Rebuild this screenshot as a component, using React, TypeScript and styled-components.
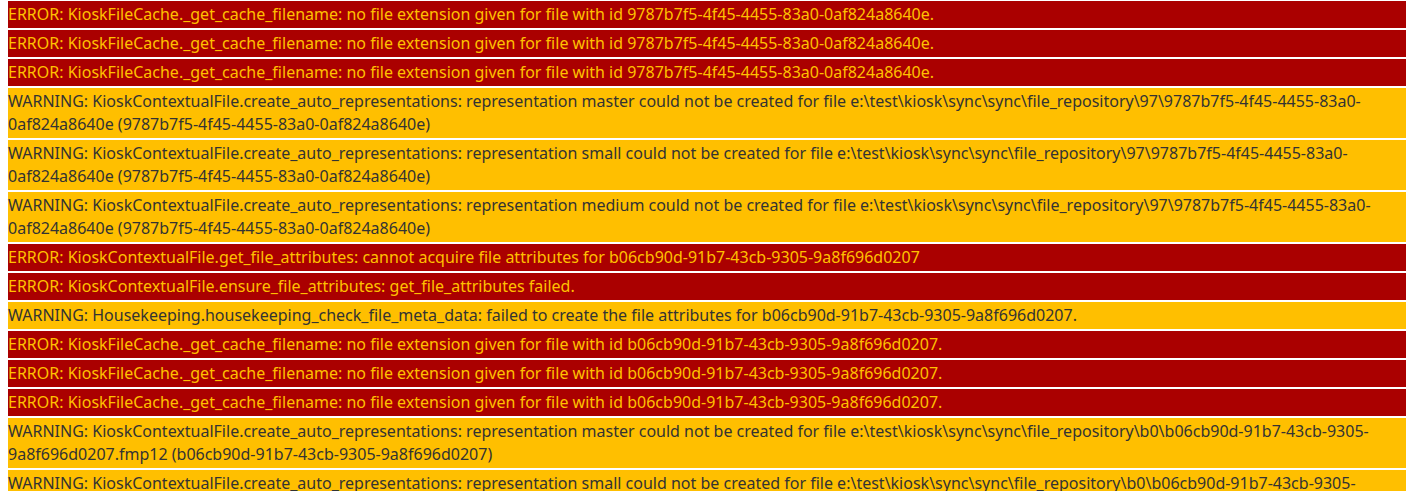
import styled, { createGlobalStyle } from 'styled-components';

const GlobalStyle = createGlobalStyle`
  body {
    margin: 0;
    padding: 1px 8px 0 8px;
    background: #fff;
    font-family: "Noto Sans", "Open Sans", sans-serif;
    overflow: hidden;
  }
`;

const LogList = styled.div`
  display: flex;
  flex-direction: column;
  gap: 2px;
`;

type Level = 'error' | 'warning';

const LogLine = styled.div<{ $level: Level }>`
  padding: 2px 0;
  font-size: 16px;
  line-height: 23px;
  background: ${(p) => (p.$level === 'error' ? '#aa0000' : '#ffbf00')};
  color: ${(p) => (p.$level === 'error' ? '#ffc000' : '#333333')};
`;

const f1 = '9787b7f5-4f45-4455-83a0-0af824a8640e';
const f2 = 'b06cb90d-91b7-43cb-9305-9a8f696d0207';

const entries: { level: Level; text: string }[] = [
  { level: 'error', text: `ERROR: KioskFileCache._get_cache_filename: no file extension given for file with id ${f1}.` },
  { level: 'error', text: `ERROR: KioskFileCache._get_cache_filename: no file extension given for file with id ${f1}.` },
  { level: 'error', text: `ERROR: KioskFileCache._get_cache_filename: no file extension given for file with id ${f1}.` },
  {
    level: 'warning',
    text: `WARNING: KioskContextualFile.create_auto_representations: representation master could not be created for file e:\\test\\kiosk\\sync\\sync\\file_repository\\97\\${f1} (${f1})`,
  },
  {
    level: 'warning',
    text: `WARNING: KioskContextualFile.create_auto_representations: representation small could not be created for file e:\\test\\kiosk\\sync\\sync\\file_repository\\97\\${f1} (${f1})`,
  },
  {
    level: 'warning',
    text: `WARNING: KioskContextualFile.create_auto_representations: representation medium could not be created for file e:\\test\\kiosk\\sync\\sync\\file_repository\\97\\${f1} (${f1})`,
  },
  { level: 'error', text: `ERROR: KioskContextualFile.get_file_attributes: cannot acquire file attributes for ${f2}` },
  { level: 'error', text: 'ERROR: KioskContextualFile.ensure_file_attributes: get_file_attributes failed.' },
  {
    level: 'warning',
    text: `WARNING: Housekeeping.housekeeping_check_file_meta_data: failed to create the file attributes for ${f2}.`,
  },
  { level: 'error', text: `ERROR: KioskFileCache._get_cache_filename: no file extension given for file with id ${f2}.` },
  { level: 'error', text: `ERROR: KioskFileCache._get_cache_filename: no file extension given for file with id ${f2}.` },
  { level: 'error', text: `ERROR: KioskFileCache._get_cache_filename: no file extension given for file with id ${f2}.` },
  {
    level: 'warning',
    text: `WARNING: KioskContextualFile.create_auto_representations: representation master could not be created for file e:\\test\\kiosk\\sync\\sync\\file_repository\\b0\\${f2}.fmp12 (${f2})`,
  },
  {
    level: 'warning',
    text: `WARNING: KioskContextualFile.create_auto_representations: representation small could not be created for file e:\\test\\kiosk\\sync\\sync\\file_repository\\b0\\${f2}.fmp12 (${f2})`,
  },
];

export default function App() {
  return (
    <>
      <GlobalStyle />
      <LogList>
        {entries.map((e, i) => (
          <LogLine key={i} $level={e.level}>
            {e.text}
          </LogLine>
        ))}
      </LogList>
    </>
  );
}
